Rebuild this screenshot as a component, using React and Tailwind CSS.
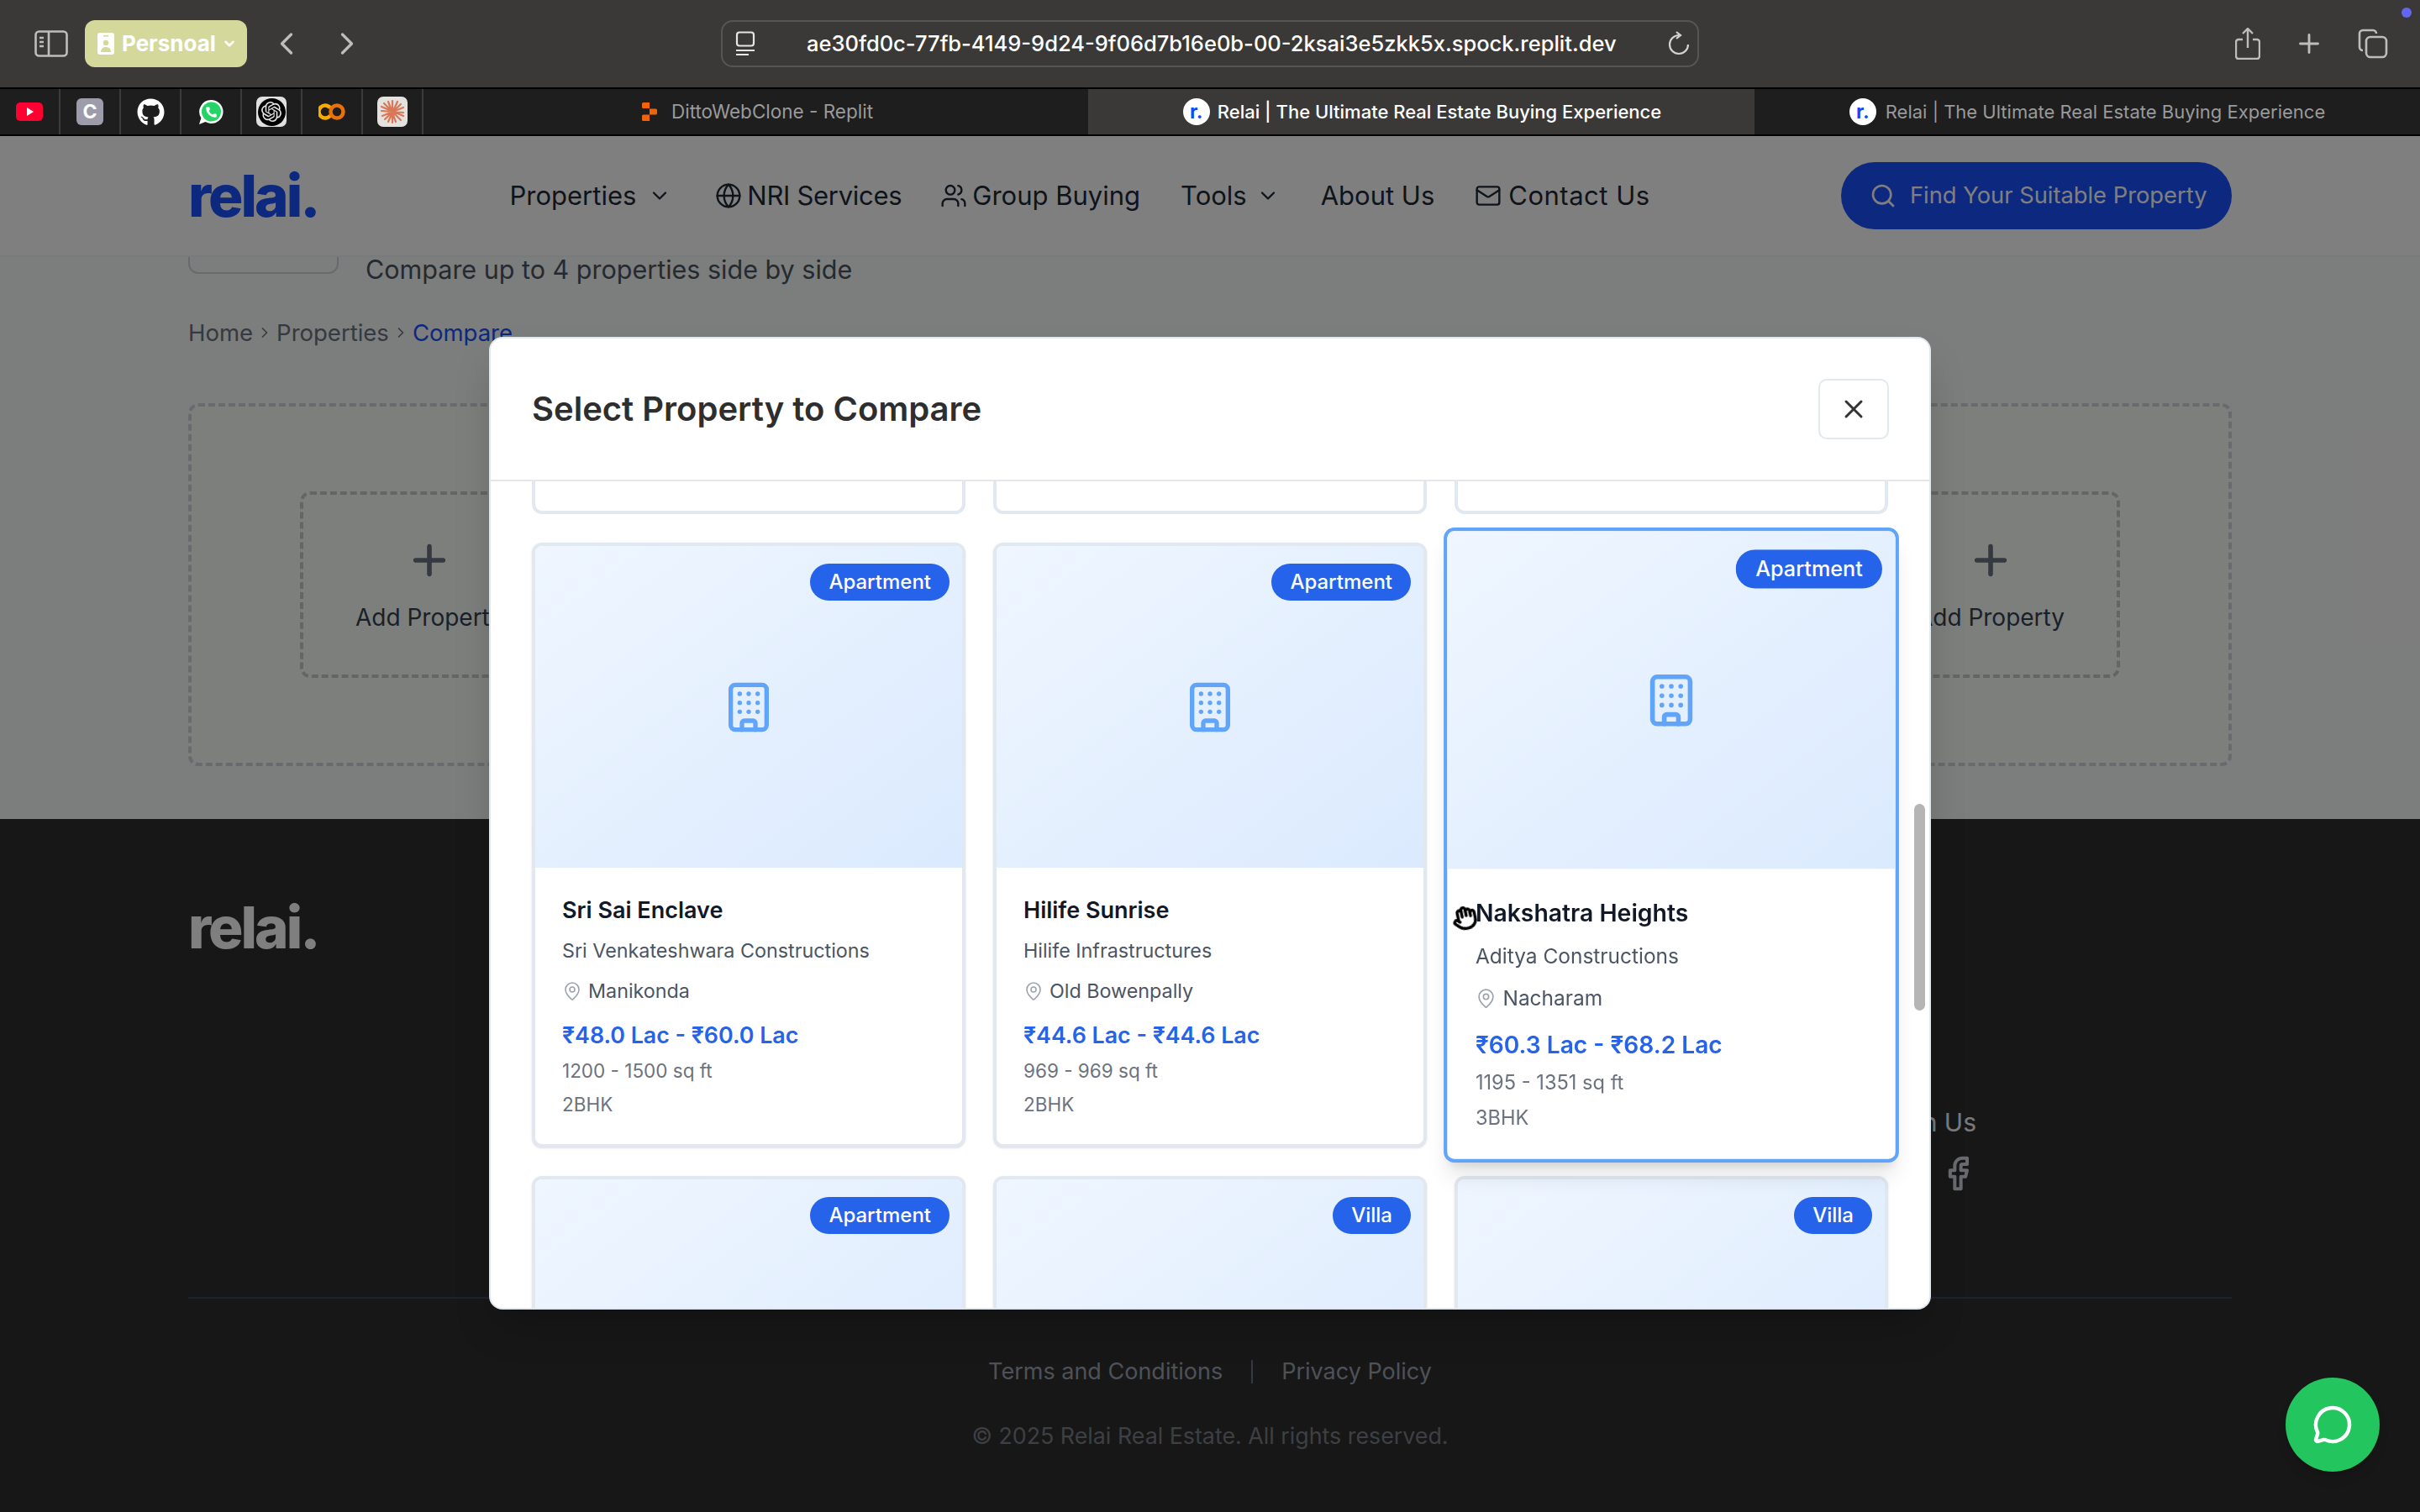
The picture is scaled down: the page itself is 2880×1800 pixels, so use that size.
import React from 'react';
import {
  Building, ChevronDown, ChevronLeft, ChevronRight, Facebook, Globe, Hand, Mail, MapPin,
  MessageCircle, Phone, Plus, Search, Users, X,
} from 'lucide-react';
import { FaGithub } from 'react-icons/fa';
import { SiOpenai } from 'react-icons/si';

const sans = { fontFamily: 'Inter, "Noto Sans", sans-serif' };

const cards = [
  { name: 'Sri Sai Enclave', dev: 'Sri Venkateshwara Constructions', area: 'Manikonda', price: '₹48.0 Lac - ₹60.0 Lac', size: '1200 - 1500 sq ft', bhk: '2BHK' },
  { name: 'Hilife Sunrise', dev: 'Hilife Infrastructures', area: 'Old Bowenpally', price: '₹44.6 Lac - ₹44.6 Lac', size: '969 - 969 sq ft', bhk: '2BHK' },
  { name: 'Nakshatra Heights', dev: 'Aditya Constructions', area: 'Nacharam', price: '₹60.3 Lac - ₹68.2 Lac', size: '1195 - 1351 sq ft', bhk: '3BHK', hovered: true },
];

const PropertyCard = ({ tag, info, hovered }) => (
  <div className={`relative overflow-hidden rounded-xl border-4 bg-white ${hovered ? 'z-10 scale-105 border-[#60a5fa] shadow-xl' : 'border-[#e2e8f0] shadow-sm'}`}>
    <div className="relative flex h-[383px] items-center justify-center bg-gradient-to-br from-[#eff6ff] to-[#dbeafe]">
      <Building size={64} className="text-[#60a5fa]" />
      <span className="absolute right-[15px] top-[21px] flex h-11 items-center rounded-full bg-[#2563eb] px-[22px] text-[24px] font-medium text-white">{tag}</span>
    </div>
    {info && (
      <div className="flex h-[329px] flex-col p-8 pt-[35px]">
        <h3 className="text-[27px] leading-[32px] font-semibold text-[#111827]">{info.name}</h3>
        <p className="mt-[16px] text-[23.3px] leading-[32px] text-[#4b5563]">{info.dev}</p>
        <div className="mt-[16px] flex items-center gap-[7px] text-[23.3px] leading-[32px] text-[#4b5563]">
          <MapPin size={24} strokeWidth={1.6} className="text-[#9ca3af]" />
          {info.area}
        </div>
        <p className="mt-[18px] text-[26.8px] leading-[36px] font-semibold text-[#2563eb]">{info.price}</p>
        <p className="mt-[9px] text-[22.5px] leading-[32px] text-[#6b7280]">{info.size}</p>
        <p className="mt-[8px] text-[22.5px] leading-[32px] text-[#6b7280]">{info.bhk}</p>
      </div>
    )}
  </div>
);

const BrowserBar = () => (
  <div className="relative flex h-[104px] items-center bg-[#3a3937] pr-[38px] text-[#bdbdbb]">
    <svg width="40" height="32" viewBox="0 0 40 32" fill="none" stroke="currentColor" strokeWidth="2.6" className="ml-[41px]">
      <rect x="1.5" y="1.5" width="37" height="29" rx="4" />
      <path d="M17 1.5v29M6 9h5M6 14h5M6 19h5" />
    </svg>
    <div className="ml-[20px] flex h-14 w-[193px] items-center rounded-[12px] bg-[#d4d99b] pl-[15px] text-[26px] font-bold text-white">
      <svg width="20" height="26" viewBox="0 0 20 26" fill="currentColor">
        <path d="M3 0h14a3 3 0 0 1 3 3v20a3 3 0 0 1-3 3H3a3 3 0 0 1-3-3V3a3 3 0 0 1 3-3z" />
        <circle cx="10" cy="12" r="3.2" fill="#d4d99b" />
        <path d="M4 23c0-4 2.500-6 6-6s6 2 6 6z" fill="#d4d99b" />
        <rect x="7" y="3" width="6" height="1.600" fill="#d4d99b" />
      </svg>
      <span className="ml-[9px] leading-none">Persnoal</span>
      <ChevronDown size={18} strokeWidth={3.4} className="ml-[7px]" />
    </div>
    <ChevronLeft size={44} strokeWidth={1.8} className="ml-[25px]" />
    <ChevronRight size={44} strokeWidth={1.8} className="ml-[28px]" />
    <div className="ml-[423px] flex h-14 w-[1164px] items-center justify-between rounded-[14px] border-2 border-[#555553] pl-[15px] pr-[8px]">
      <div className="flex items-center">
        <svg width="24" height="30" viewBox="0 0 24 30" fill="none" stroke="#e5e5e5" strokeWidth="2.2">
          <rect x="2" y="1.5" width="20" height="16" rx="3" />
          <path d="M1 23h22M1 28h15" />
        </svg>
        <span className="ml-[61px] text-[25.500px] font-medium whitespace-nowrap text-white">ae30fd0c-77fb-4149-9d24-9f06d7b16e0b-00-2ksai3e5zkk5x.spock.replit.dev</span>
      </div>
      <svg width="28" height="30" viewBox="0 0 28 30" fill="none" stroke="#d4d4d4" strokeWidth="2.2">
        <path d="M14 5a11 11 0 1 0 11 11" />
        <path d="M11 1l5 4-5 4" />
      </svg>
    </div>
    <div className="ml-auto flex items-center gap-[40px]">
      <svg width="30" height="38" viewBox="0 0 30 38" fill="none" stroke="currentColor" strokeWidth="2.4">
        <path d="M9 14H4a3 3 0 0 0-3 3v17a3 3 0 0 0 3 3h22a3 3 0 0 0 3-3V17a3 3 0 0 0-3-3h-5" />
        <path d="M15 24V2M9 7l6-6 6 6" />
      </svg>
      <Plus size={36} strokeWidth={1.9} />
      <svg width="36" height="36" viewBox="0 0 36 36" fill="none" stroke="currentColor" strokeWidth="2.6">
        <path d="M6 26a4 4 0 0 1-4-4V6a4 4 0 0 1 4-4h12a4 4 0 0 1 4 4" />
        <rect x="10" y="10" width="24" height="24" rx="5" />
      </svg>
    </div>
    <span className="absolute left-[2858px] top-[9px] size-3 rounded-full bg-[#6366f1]" />
  </div>
);

const Pinned = ({ children }) => (
  <div className="flex h-full w-[72px] items-center justify-center border-r-2 border-[#3b3b3b]">{children}</div>
);

const RelaiIcon = () => (
  <span className="flex size-[32px] items-center justify-center rounded-full bg-white text-[23px] leading-none font-bold text-[#0a4dff]">r.</span>
);

const TabBar = () => (
  <div className="flex h-[58px] border-y-2 border-black bg-[#1e1e1e] text-[22px]">
    <Pinned>
      <span className="flex h-[22px] w-[32px] items-center justify-center rounded-[5px] bg-[#ff0033]">
        <span className="ml-[2px] h-0 w-0 border-y-[5px] border-l-[8px] border-y-transparent border-l-white" />
      </span>
    </Pinned>
    <Pinned><span className="flex size-[32px] items-center justify-center rounded-[6px] bg-[#9c9cab] text-[23px] font-bold text-white">C</span></Pinned>
    <Pinned><FaGithub size={33} className="text-white" /></Pinned>
    <Pinned>
      <span className="relative flex size-[31px] items-center justify-center">
        <svg width="31" height="31" viewBox="0 0 31 31">
          <path d="M15.500 1a14 14 0 1 1-7 26.100L1 30l2.400-7.500A14 14 0 0 1 15.500 1z" fill="#fff" />
          <circle cx="15.500" cy="15" r="11.500" fill="#25d366" />
        </svg>
        <Phone size={15} fill="#fff" strokeWidth={0} className="absolute left-[8px] top-[8px]" />
      </span>
    </Pinned>
    <Pinned>
      <span className="flex size-[36px] items-center justify-center rounded-[7px] bg-[#e0e0e0]">
        <span className="flex size-[33px] items-center justify-center rounded-full bg-black">
          <SiOpenai size={24} className="text-[#e5e5e5]" />
        </span>
      </span>
    </Pinned>
    <Pinned>
      <svg width="32" height="20" viewBox="0 0 32 20" fill="none" strokeWidth="4.500">
        <path d="M14 5.500a7.500 7.500 0 1 0 0 9" stroke="#f9ab00" />
        <circle cx="22" cy="10" r="7.500" stroke="#e8710a" />
      </svg>
    </Pinned>
    <Pinned>
      <span className="flex size-[36px] items-center justify-center rounded-[7px] bg-[#e4e2de]">
        <svg width="32" height="32" viewBox="0 0 32 32" stroke="#d97757" strokeWidth="2.200" strokeLinecap="round">
          <path d="M16 3v26M3 15l26 2M6 6l20 20M26 7L7 25M11 4l9 24M22 4l-11 24M3 10l26 11M29 11L4 21" />
        </svg>
      </span>
    </Pinned>
    <div className="flex w-[793px] items-center justify-center gap-[17px] border-r-2 border-[#3b3b3b] pl-[4px] text-[22.500px] text-[#9a9a9a]">
      <svg width="18" height="22" viewBox="0 0 18 22" fill="#f26207">
        <path d="M0 1.500A1.500 1.500 0 0 1 1.500 0H9v7H1.500A1.500 1.500 0 0 1 0 5.500zM9 7.500h7.500A1.500 1.500 0 0 1 18 9v4a1.500 1.500 0 0 1-1.500 1.500H9zM0 16a1.500 1.500 0 0 1 1.500-1.500H9V22H1.500A1.500 1.500 0 0 1 0 20.500z" />
      </svg>
      DittoWebClone - Replit
    </div>
    <div className="flex w-[791px] items-center justify-center gap-[9px] bg-[#3a3937] font-medium text-white">
      <RelaiIcon />Relai | The Ultimate Real Estate Buying Experience
    </div>
    <div className="flex flex-1 items-center justify-center gap-[11px] text-[#9a9a9a]">
      <RelaiIcon />Relai | The Ultimate Real Estate Buying Experience
    </div>
  </div>
);

const SiteNav = () => (
  <nav className="relative z-10 flex h-[144px] items-center border-b-2 border-[#f3f4f6] bg-white px-[224px] text-[31px] text-[#1f2937]">
    <span className="text-[69px] leading-none font-extrabold tracking-[-3px] text-[#1a50ff]">relai.</span>
    <div className="ml-[228px] flex items-center">
      <span>Properties</span>
      <ChevronDown size={28} className="ml-[14px]" />
      <Globe size={32} strokeWidth={1.8} className="ml-[52px]" />
      <span className="ml-[6px] tracking-[-0.3px]">NRI Services</span>
      <Users size={32} strokeWidth={1.8} className="ml-[46px]" />
      <span className="ml-[6px]">Group Buying</span>
      <span className="ml-[48px]">Tools</span>
      <ChevronDown size={28} className="ml-[11px]" />
      <span className="ml-[49px]">About Us</span>
      <Mail size={32} strokeWidth={1.8} className="ml-[48px]" />
      <span className="ml-[8px] tracking-[0.5px]">Contact Us</span>
    </div>
    <button className="ml-auto flex h-20 w-[465px] items-center gap-[16px] rounded-full bg-[#1a50ff] pl-[34px] text-[27.300px] whitespace-nowrap text-white">
      <Search size={32} strokeWidth={2} />
      Find Your Suitable Property
    </button>
  </nav>
);

const AddSlot = () => (
  <div className="flex h-[222px] w-[308px] flex-col items-center justify-center rounded-xl border-4 border-dashed border-[#cbcbcb]">
    <Plus size={56} strokeWidth={2.4} className="text-[#6b7280]" />
    <span className="mt-[22px] text-[28px] leading-[36px] text-[#374151]">Add Property</span>
  </div>
);

const Page = () => (
  <div className="flex flex-1 flex-col bg-white">
    <SiteNav />
    <div className="h-[669px] bg-[#f9fafb] px-[224px]">
      <div className="flex h-[50px]">
        <div className="mt-[-40px] h-[60px] w-[179px] rounded-xl border-2 border-[#d1d5db]" />
        <p className="ml-[32px] mt-[-1px] text-[30.500px] leading-[32px] text-[#4b5563]">Compare up to 4 properties side by side</p>
      </div>
      <div className="mt-[22px] flex items-center text-[27.500px] leading-[36px] text-[#6b7280]">
        <span>Home</span>
        <ChevronRight size={20} className="mx-[4px]" />
        <span>Properties</span>
        <ChevronRight size={20} className="mx-[4px]" />
        <span className="text-[#1a50ff]">Compare</span>
      </div>
      <div className="mt-[66px] flex h-[432px] items-center justify-between rounded-xl border-4 border-dashed border-[#d1d5db] bg-[#fafffa] px-[129px]">
        <AddSlot /><AddSlot /><AddSlot /><AddSlot />
      </div>
    </div>
    <footer className="flex flex-1 flex-col bg-[#2e2e2e] px-[224px] pt-[95px]">
      <span className="w-fit text-[69px] leading-none font-extrabold tracking-[-3px] text-white">relai.</span>
      <div className="mr-[304px] mt-[179px] flex flex-col items-end">
        <span className="text-[30px] leading-[36px] text-[#f3f4f6]">Join Us</span>
        <Facebook size={44} strokeWidth={2.2} className="mt-[21px] text-[#d1d5db]" />
      </div>
      <div className="mt-[125px] h-0.5 bg-[#3a4766]" />
      <div className="mt-[69px] flex flex-col items-center text-[#9ca3af]">
        <div className="flex items-center text-[27px] leading-[36px]">
          <span>Terms and Conditions</span>
          <span className="mx-[34px] h-7 w-0.5 bg-[#6b7280]" />
          <span>Privacy Policy</span>
        </div>
        <p className="mt-[40px] text-[26.800px] leading-[36px] text-[#7c7f87]">© 2025 Relai Real Estate. All rights reserved.</p>
      </div>
    </footer>
  </div>
);

const Modal = () => (
  <div className="absolute left-[582px] top-[401px] z-30 flex h-[1158px] w-[1716px] flex-col overflow-hidden rounded-[16px] border-2 border-[#e2e8f0] bg-white shadow-2xl">
    <div className="flex h-[170px] shrink-0 items-center justify-between border-b-2 border-[#e5e7eb] pl-[49px] pr-[48px]">
      <h2 className="text-[40px] font-semibold text-[#2e2e2e]">Select Property to Compare</h2>
      <button className="flex h-[72px] w-[84px] items-center justify-center rounded-[10px] border-2 border-[#e2e8f0] text-[#333333]">
        <X size={36} strokeWidth={2} />
      </button>
    </div>
    <div className="relative flex-1 overflow-hidden">
      <div className="grid grid-cols-[repeat(3,516px)] gap-x-[33px] gap-y-[34px] pl-[49px]">
        <div className="h-[39px] rounded-b-xl border-4 border-t-0 border-[#e2e8f0]" />
        <div className="h-[39px] rounded-b-xl border-4 border-t-0 border-[#e2e8f0]" />
        <div className="h-[39px] rounded-b-xl border-4 border-t-0 border-[#e2e8f0]" />
        {cards.map((c) => (
          <PropertyCard key={c.name} tag="Apartment" info={c} hovered={c.hovered} />
        ))}
        <PropertyCard tag="Apartment" />
        <PropertyCard tag="Villa" />
        <PropertyCard tag="Villa" />
      </div>
      <div className="absolute left-[1694px] top-[384px] h-[246px] w-[13px] rounded-full bg-[#b5b5b5]" />
    </div>
    <Hand size={30} strokeWidth={2.8} className="absolute left-[1144px] top-[675px] z-20 -rotate-12 text-black blur-[0.5px]" />
  </div>
);

export default function App() {
  return (
    <div className="relative flex h-[1800px] w-[2880px] flex-col overflow-hidden" style={sans}>
      <BrowserBar />
      <TabBar />
      <div className="relative flex flex-1 flex-col">
        <Page />
        <div className="absolute inset-0 z-20 bg-black/50" />
      </div>
      <Modal />
      <button className="absolute left-[2720px] top-[1640px] z-40 flex size-28 items-center justify-center rounded-full bg-[#22c55e] text-white shadow-lg">
        <MessageCircle size={48} strokeWidth={2.2} />
      </button>
    </div>
  );
}
